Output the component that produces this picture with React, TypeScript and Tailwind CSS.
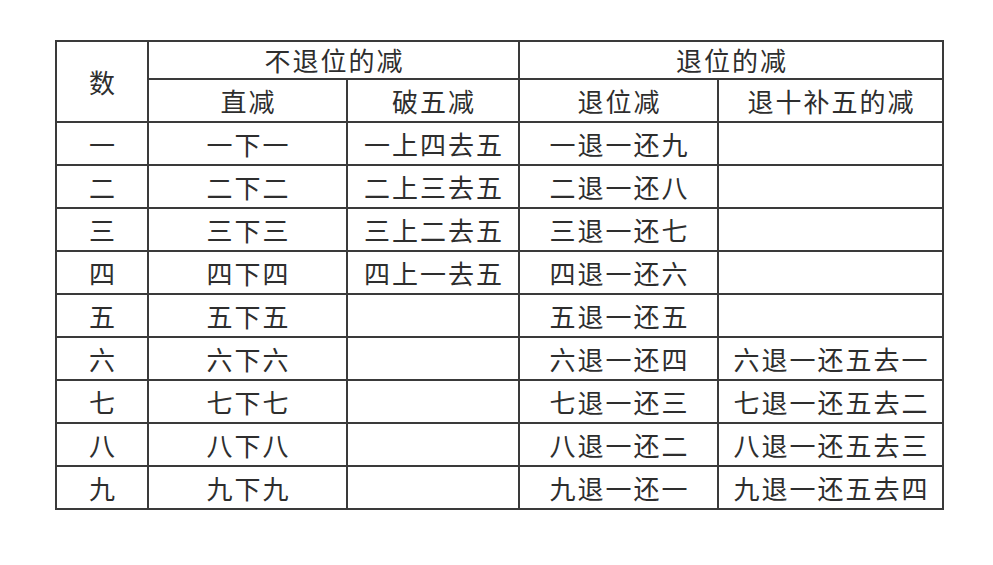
import React from "react";

const rows: [string, string, string, string, string][] = [
  ["一", "一下一", "一上四去五", "一退一还九", ""],
  ["二", "二下二", "二上三去五", "二退一还八", ""],
  ["三", "三下三", "三上二去五", "三退一还七", ""],
  ["四", "四下四", "四上一去五", "四退一还六", ""],
  ["五", "五下五", "", "五退一还五", ""],
  ["六", "六下六", "", "六退一还四", "六退一还五去一"],
  ["七", "七下七", "", "七退一还三", "七退一还五去二"],
  ["八", "八下八", "", "八退一还二", "八退一还五去三"],
  ["九", "九下九", "", "九退一还一", "九退一还五去四"],
];

const cell =
  "border-2 border-[#3a3a3a] text-center align-middle p-0 pl-[2px] tracking-[2px] leading-none";

export default function App() {
  return (
    <div
      className="w-[993px] h-[565px] bg-white pt-[40px] pl-[55px] text-[#2e2e2e] text-[26px]"
      style={{ fontFamily: '"Noto Sans CJK SC", "Noto Sans", sans-serif' }}
    >
      <table className="border-collapse table-fixed w-[887px]">
        <colgroup>
          <col className="w-[92px]" />
          <col className="w-[199px]" />
          <col className="w-[172px]" />
          <col className="w-[199px]" />
          <col className="w-[225px]" />
        </colgroup>
        <tbody>
          <tr className="h-[38px]">
            <td rowSpan={2} className={cell}>
              数
            </td>
            <td colSpan={2} className={cell}>
              不退位的减
            </td>
            <td colSpan={2} className={cell}>
              退位的减
            </td>
          </tr>
          <tr className="h-[43px]">
            <td className={cell}>直减</td>
            <td className={cell}>破五减</td>
            <td className={cell}>退位减</td>
            <td className={cell}>退十补五的减</td>
          </tr>
          {rows.map((r, i) => (
            <tr key={i} className="h-[43px]">
              {r.map((c, j) => (
                <td key={j} className={cell}>
                  {c}
                </td>
              ))}
            </tr>
          ))}
        </tbody>
      </table>
    </div>
  );
}
